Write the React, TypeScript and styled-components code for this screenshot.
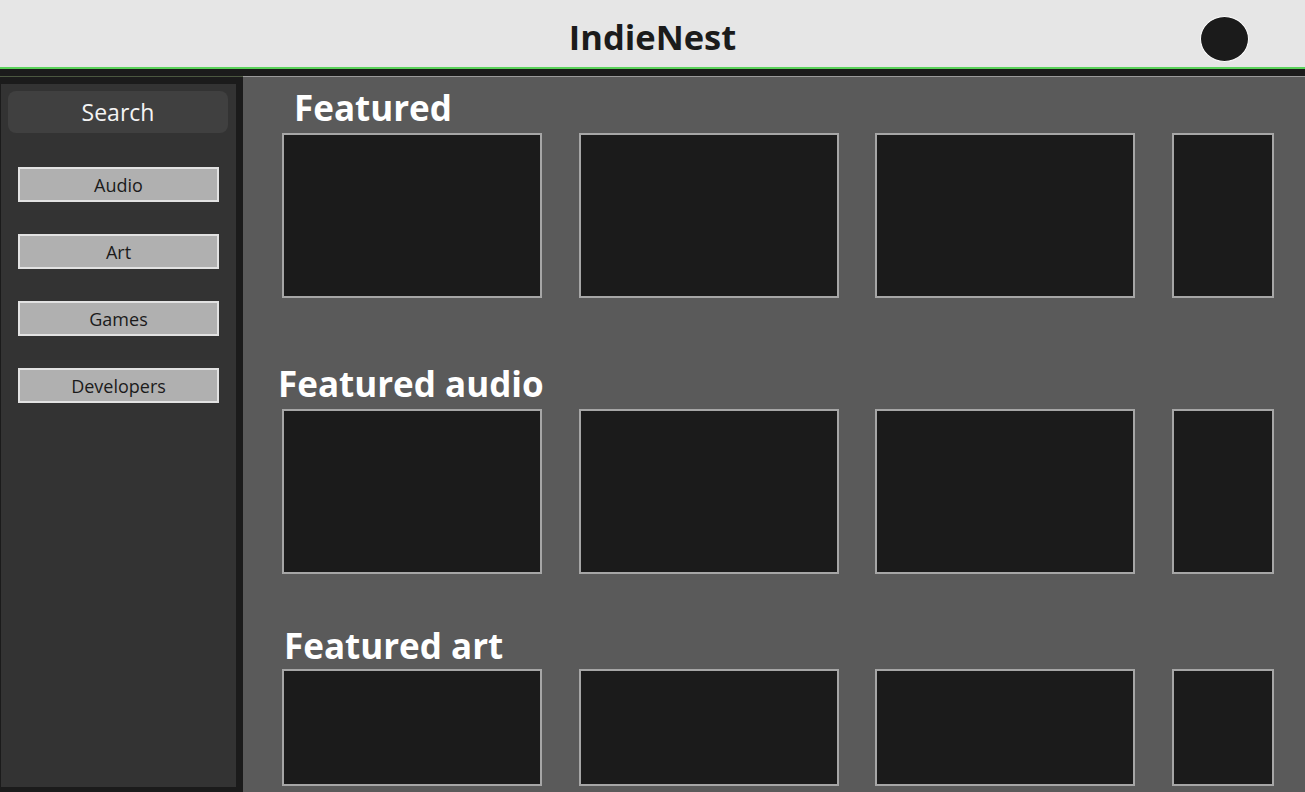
import styled, { createGlobalStyle } from "styled-components";

const GlobalStyle = createGlobalStyle`
    html, body {
        margin: 0;
        padding: 0;
        background: #1b1b1b;
        overflow: hidden;
    }

    body {
        font-family: "Open Sans", "Noto Sans", sans-serif;
    }

    * {
        box-sizing: border-box;
    }
`;

const Page = styled.div`
    width: 1305px;
    height: 792px;
    display: flex;
    flex-direction: column;
    background: #1b1b1b;
    overflow: hidden;
`;

const Header = styled.header`
    height: 69px;
    flex: none;
    display: grid;
    grid-template-columns: 1fr auto 1fr;
    align-items: start;
    background: #e6e6e6;
    border-bottom: 2px solid #5ad25a;
`;

const Title = styled.h1`
    grid-column: 2;
    margin: 0;
    padding-top: 12px;
    font-size: 34.5px;
    line-height: 49px;
    font-weight: 700;
    color: #1b1b1b;
`;

const Avatar = styled.div`
    grid-column: 3;
    justify-self: end;
    margin: 16px 56px 0 0;
    width: 49px;
    height: 46px;
    border-radius: 50%;
    background: #1b1b1b;
    border: 1px solid #ffffff;
`;

const Body = styled.div`
    flex: 1;
    display: flex;
    padding-top: 7px;
    min-height: 0;
`;

const Sidebar = styled.aside`
    width: 243px;
    flex: none;
    display: flex;
    padding: 7px 7px 5px 1px;
    border-top: 1px solid #4b5740;
`;

const Panel = styled.nav`
    flex: 1;
    display: flex;
    flex-direction: column;
    align-items: flex-start;
    padding: 7px 0 0 7px;
    background: #333333;
`;

const Search = styled.div`
    width: 220px;
    height: 42px;
    display: flex;
    align-items: center;
    justify-content: center;
    border-radius: 8px;
    background: #404040;
    color: #f4f4f4;
    font-size: 23px;
`;

const CategoryList = styled.div`
    display: flex;
    flex-direction: column;
    gap: 32px;
    margin: 34px 0 0 10px;
`;

const Category = styled.button`
    width: 201px;
    height: 35px;
    padding: 0;
    border: 2px solid #e2e2e2;
    background: #b0b0b0;
    color: #1b1b1b;
    font-family: "Open Sans", "Noto Sans", sans-serif;
    font-size: 18px;
    cursor: pointer;
`;

const Main = styled.main`
    flex: 1;
    display: flex;
    flex-direction: column;
    padding-top: 11px;
    background: #5a5a5a;
    border-top: 1px solid #9a9a9a;
    overflow: hidden;
`;

const Section = styled.section<{ $top: number }>`
    margin-top: ${(p) => p.$top}px;
    display: flex;
    flex-direction: column;
`;

const Heading = styled.h2<{ $indent: number; $gap: number }>`
    margin: 0 0 ${(p) => p.$gap}px ${(p) => p.$indent}px;
    font-size: 35px;
    line-height: 40px;
    font-weight: 700;
    color: #ffffff;
`;

const CardRow = styled.div`
    display: flex;
    gap: 36.5px;
    padding-left: 39px;
`;

const Card = styled.div<{ $wide: boolean; $height: number }>`
    width: ${(p) => (p.$wide ? 260 : 102)}px;
    height: ${(p) => p.$height}px;
    flex: none;
    background: #1b1b1b;
    border: 2px solid #a6a6a6;
`;

const categories = ["Audio", "Art", "Games", "Developers"];

const sections = [
    { title: "Featured", top: 0, indent: 51, gap: 5, height: 165 },
    { title: "Featured audio", top: 66, indent: 35, gap: 5, height: 165 },
    { title: "Featured art", top: 52, indent: 41, gap: 3, height: 117 },
];

const App: React.FC = () => {
    return (
        <Page>
            <GlobalStyle />
            <Header>
                <Title>IndieNest</Title>
                <Avatar />
            </Header>

            <Body>
                <Sidebar>
                    <Panel>
                        <Search>Search</Search>
                        <CategoryList>
                            {categories.map((c) => (
                                <Category key={c}>{c}</Category>
                            ))}
                        </CategoryList>
                    </Panel>
                </Sidebar>

                <Main>
                    {sections.map((s) => (
                        <Section key={s.title} $top={s.top}>
                            <Heading $indent={s.indent} $gap={s.gap}>{s.title}</Heading>
                            <CardRow>
                                {[0, 1, 2, 3].map((i) => (
                                    <Card key={i} $wide={i < 3} $height={s.height} />
                                ))}
                            </CardRow>
                        </Section>
                    ))}
                </Main>
            </Body>
        </Page>
    );
};

export default App;
